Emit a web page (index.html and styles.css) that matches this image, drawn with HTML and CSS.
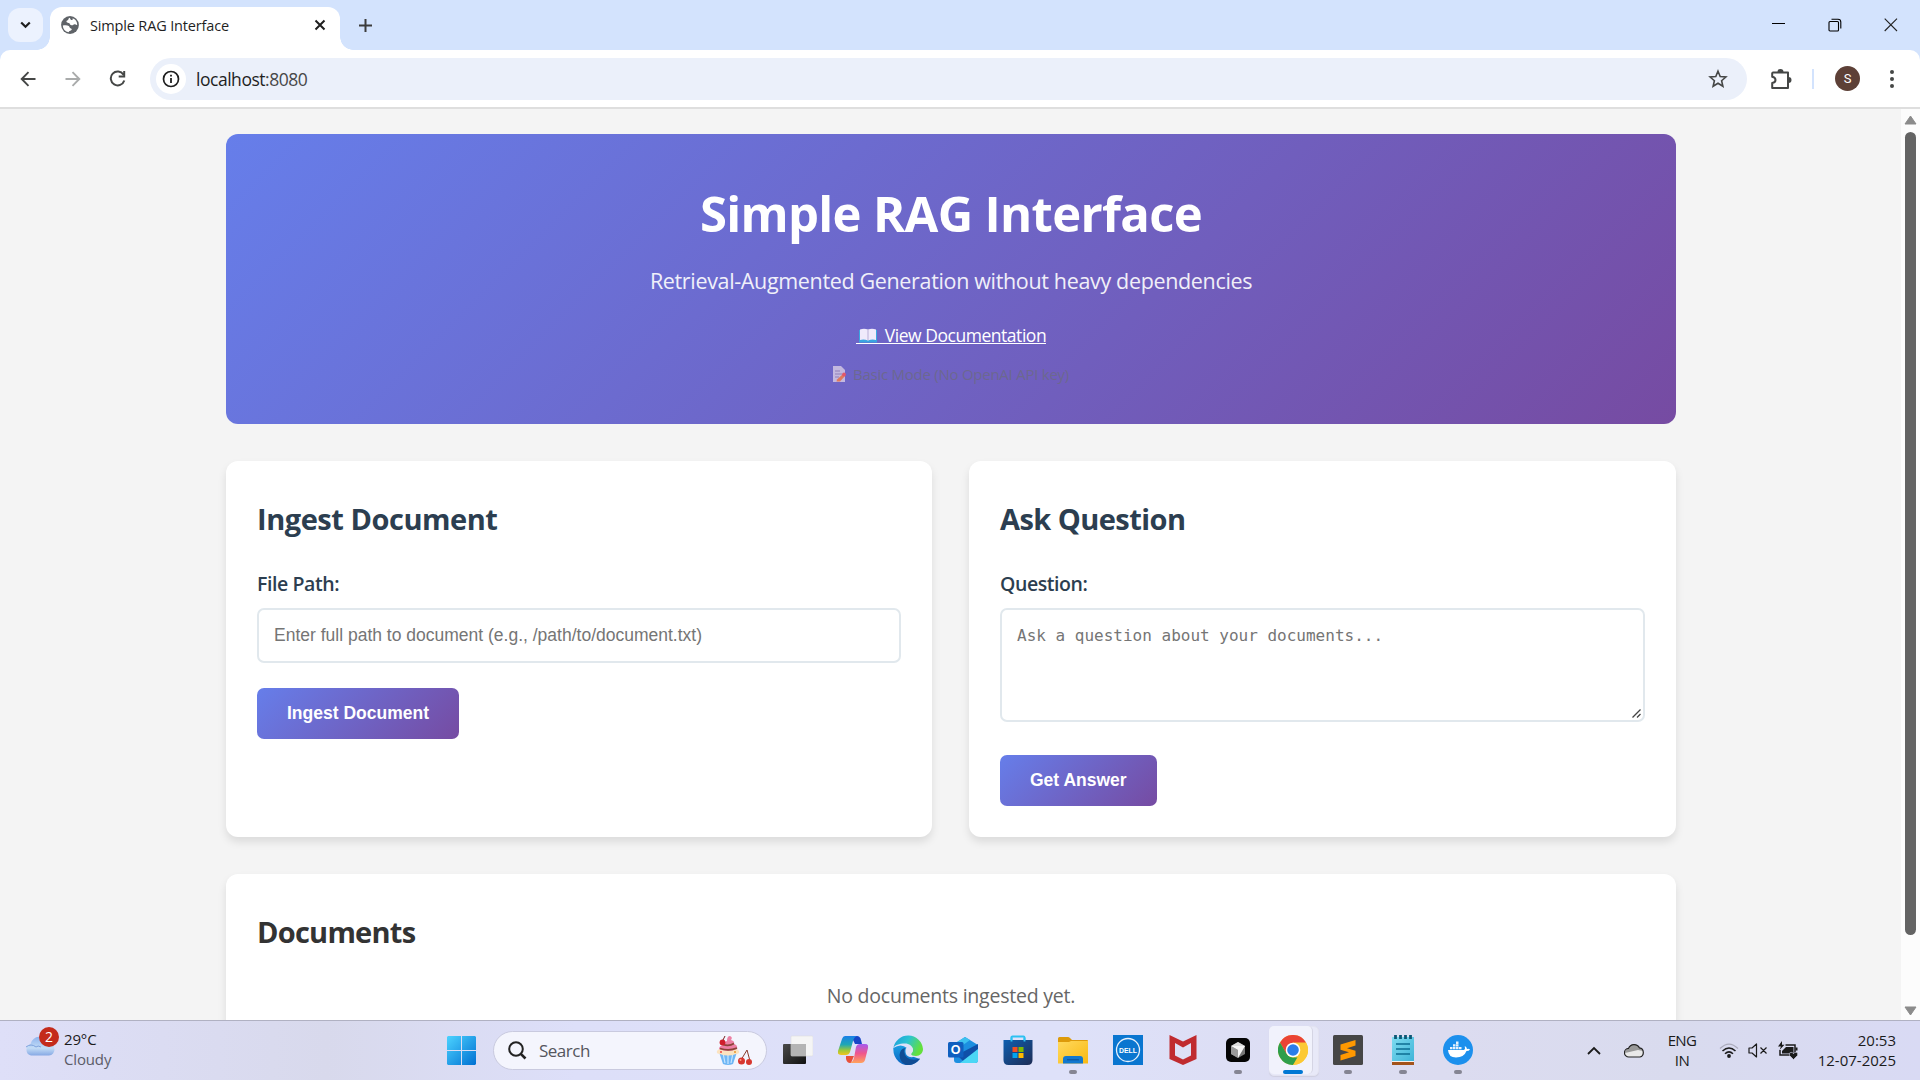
FILE: index.html
```html
<!DOCTYPE html>
<html lang="en">
<head>
<meta charset="utf-8">
<title>Simple RAG Interface</title>
<link rel="stylesheet" href="styles.css">
</head>
<body>
<div class="screen">
  <div class="tabstrip">
    <div class="tab-search"><svg width="11" height="8" viewBox="0 0 11 8"><path d="M1.2 1.5l4.3 4.3 4.3-4.3" fill="none" stroke="#1f1f1f" stroke-width="2.2"/></svg></div>
    <div class="tab">
      <svg width="18" height="18" viewBox="0 0 18 18"><circle cx="9" cy="9" r="8.900" fill="#5f6368"/><path d="M8.500 1.800C6.800 2.500 8 4 6.200 4.600 4.600 5.200 5.800 7 7.500 7c1.700 0 1 2 3 2.300 1.800.3 1.900-1.300 3.500-1 1 .2 1.500.7 2.200.8A7.200 7.200 0 0 0 11.500 2.200c.8 1.500-.4 2.200-1.300 1.700C9.200 3.500 9.500 2.500 8.500 1.800z" fill="#fff"/><path d="M1.800 9.500c2-.4 4.500-.6 6 .5 1.200 1 .4 2.200 2.200 2.400 1.500.2.8 2-.7 2.300-1 .2-1.400.8-1.600 1.600A7.300 7.300 0 0 1 1.800 9.500z" fill="#fff"/></svg>
      <span class="tab-title">Simple RAG Interface</span>
      <svg width="12" height="12" viewBox="0 0 12 12"><path d="M1.500 1.500l9 9m0-9l-9 9" stroke="#1f1f1f" stroke-width="2"/></svg>
    </div>
    <svg class="new-tab" width="13" height="13" viewBox="0 0 13 13"><path d="M6.500 0v13M0 6.500h13" stroke="#3c3c3c" stroke-width="2"/></svg>
    <div class="win-controls">
      <svg width="14" height="14" viewBox="0 0 14 14"><path d="M0 5.500h13" stroke="#000" stroke-width="1"/></svg>
      <svg width="14" height="14" viewBox="0 0 14 14"><rect x="1" y="3.500" width="9.500" height="9.500" rx="1" fill="none" stroke="#000" stroke-width="1.100"/><path d="M3.500 1.200h6.500q2.800 0 2.800 2.800v6.500" fill="none" stroke="#000" stroke-width="1.100"/></svg>
      <svg width="14" height="14" viewBox="0 0 14 14"><path d="M.7 .7l12.300 12.300m0-12.300L.7 13" stroke="#222" stroke-width="1.100"/></svg>
    </div>
  </div>
  <div class="toolbar-wrap">
  <div class="toolbar">
    <svg class="back" width="16" height="16" viewBox="0 0 16 16"><path d="M8.500 1.200L1.700 8l6.800 6.800M2 8h13.500" fill="none" stroke="#454746" stroke-width="1.900"/></svg>
    <svg class="fwd" width="16" height="16" viewBox="0 0 16 16"><path d="M7.500 1.200L14.300 8l-6.800 6.800M14 8H.5" fill="none" stroke="#a9abab" stroke-width="1.900"/></svg>
    <svg class="reload" width="17" height="17" viewBox="0 0 17 17"><path d="M14.500 4.700A6.900 6.900 0 1 0 15.300 10.500M15.200 1v5.500H9.700" fill="none" stroke="#454746" stroke-width="2"/></svg>
    <div class="omnibox">
      <div class="info"><svg width="18" height="18" viewBox="0 0 18 18"><circle cx="9" cy="9" r="7.500" fill="none" stroke="#1f1f1f" stroke-width="1.700"/><path d="M9 8v5M9 4.700v1.900" stroke="#1f1f1f" stroke-width="1.800"/></svg></div>
      <span class="url">localhost<span class="port">:8080</span></span>
      <svg width="20" height="20" viewBox="0 0 20 20"><path d="M10 2.200l2.200 5.300 5.700.5-4.300 3.700 1.300 5.600L10 14.300l-4.900 3 1.300-5.600L2.100 8l5.700-.5z" fill="none" stroke="#454746" stroke-width="1.600"/></svg>
    </div>
    <svg class="ext" width="22" height="22" viewBox="0 0 22 22"><path d="M3 4.500h15v15.500H2.200v-5q3.300-.5 3.300-3T2.200 8.800V5.300z" fill="none" stroke="#454746" stroke-width="2" stroke-linejoin="round"/><path d="M7.500 4a3 3 0 0 1 6 0zM18.500 9v6a3 3 0 0 0 0-6z" fill="#454746"/></svg>
    <div class="tb-sep"></div>
    <div class="avatar">S</div>
    <svg class="dots" width="4" height="18" viewBox="0 0 4 18"><g fill="#454746"><circle cx="2" cy="2" r="2"/><circle cx="2" cy="9" r="2"/><circle cx="2" cy="16" r="2"/></g></svg>
  </div>
  </div>
  <div class="viewport">
    <main class="page">
      <header class="hero">
        <h1>Simple RAG Interface</h1>
        <p class="sub">Retrieval-Augmented Generation without heavy dependencies</p>
        <a class="doc-link" href="#"><svg width="18" height="15" viewBox="0 0 18 15"><path d="M0 2h18v12.500H0z" fill="#3aa5e0"/><path d="M1 1.500Q5 0 9 1.500 13 0 17 1.500V12q-4-1-8 .5Q5 11 1 12z" fill="#efeafb"/><path d="M9 1.500v11" stroke="#b9afd6" stroke-width="1"/></svg>View Documentation</a>
        <p class="mode"><svg width="13" height="16" viewBox="0 0 13 16"><path d="M0 0h8l4 4v12H0z" fill="#c3b8df"/><path d="M2 5h5M2 8h7M2 11h4" stroke="#8f7fb8" stroke-width="1"/><path d="M4 13.500l6-5.500 2 2-5 5.500H3.500z" fill="#e0795c"/><circle cx="11" cy="8.500" r="1.900" fill="#e2576c"/></svg>Basic Mode (No OpenAI API key)</p>
      </header>
      <div class="grid">
        <section class="card">
          <h2>Ingest Document</h2>
          <label>File Path:</label>
          <input type="text" placeholder="Enter full path to document (e.g., /path/to/document.txt)">
          <button>Ingest Document</button>
        </section>
        <section class="card">
          <h2 class="ask">Ask Question</h2>
          <label>Question:</label>
          <div class="field">
            <textarea placeholder="Ask a question about your documents..."></textarea>
            <svg class="grip" width="9" height="9" viewBox="0 0 9 9"><path d="M.5 8.500l8-8M5 8.500L8.500 5" stroke="#444" stroke-width="1.300"/></svg>
          </div>
          <button class="get">Get Answer</button>
        </section>
      </div>
      <section class="card docs">
        <h2>Documents</h2>
        <p>No documents ingested yet.</p>
      </section>
    </main>
    <div class="scrollbar">
      <svg width="13" height="10" viewBox="0 0 13 10"><path d="M6.500 1L12 9H1z" fill="#8b8b8b" stroke="#8b8b8b" stroke-linejoin="round"/></svg>
      <div class="thumb"></div>
      <svg width="13" height="10" viewBox="0 0 13 10"><path d="M6.500 9L12 1H1z" fill="#8b8b8b" stroke="#8b8b8b" stroke-linejoin="round"/></svg>
    </div>
  </div>
  <div class="taskbar">
    <div class="weather">
      <div class="cloud"><svg width="30" height="20" viewBox="0 0 30 20"><defs><linearGradient id="cl" x1="0" y1="0" x2="0" y2="1"><stop offset="0" stop-color="#8fb4ee"/><stop offset=".6" stop-color="#c3dcf6"/><stop offset="1" stop-color="#86a9e4"/></linearGradient></defs><path d="M6 19.500a6 6 0 0 1-.5-11.500A9 9 0 0 1 23 7.500a6 6 0 0 1 1 12z" fill="url(#cl)"/><path d="M1 11q5-4 10 0 2-2 5 0" fill="none" stroke="#7fa3de"/></svg><span class="badge">2</span></div>
      <div class="wtext"><span>29°C</span><span class="muted">Cloudy</span></div>
    </div>
    <div class="center">
      <svg class="start" width="29" height="29" viewBox="0 0 29 29"><defs><linearGradient id="w" x1="0" y1="0" x2="1" y2="1"><stop offset="0" stop-color="#4cd3ff"/><stop offset="1" stop-color="#0070d2"/></linearGradient></defs><path d="M1 0h13v14H0V1zM15 0h13l1 1v13H15zM0 15h14v14H1l-1-1zM15 15h14v13l-1 1H15z" fill="url(#w)"/></svg>
      <div class="search">
        <svg width="19" height="19" viewBox="0 0 19 19"><circle cx="8" cy="8" r="6.800" fill="none" stroke="#222" stroke-width="2"/><path d="M12.800 12.800l4.700 4.700" stroke="#222" stroke-width="2.600"/></svg>
        <span>Search</span>
        <svg width="36" height="31" viewBox="0 0 36 31"><path d="M3 17h18l-4 12q-5 2-10 0z" fill="#6fb7f5"/><path d="M7 18l2 10M12 18v11M17 18l-2 10" stroke="#c8e6ff" stroke-width="1.200"/><path d="M1 16q1-3 11-3t11 3-3 3q-8 3-16 0-4 0-3-3" fill="#fbe3c0"/><path d="M3 14q0-3 4-4-1-3 4-4 0-5 3-5 3 1 1 4 4 1 3 4 4 1 3 5-9 4-18 0" fill="#ec7fa3"/><path d="M7 9.500q6 2 11-1M4 13.500q9 3 17-.5" fill="none" stroke="#8b4438" stroke-width="1.800"/><circle cx="6.500" cy="7.500" r="2.900" fill="#cf1f2b"/><path d="M7 5l2-4" stroke="#7b2020"/><path d="M25 25l6-10 3 11" fill="none" stroke="#8a3b2c" stroke-width="1"/><circle cx="25.500" cy="26" r="3.500" fill="#d7372f"/><circle cx="33" cy="27" r="3" fill="#d7372f"/><circle cx="24.500" cy="25" r="1" fill="#ff9a85"/><circle cx="5" cy="17" r="1" fill="#e44"/><circle cx="19" cy="17" r="1" fill="#e9952a"/></svg>
      </div>
      <div class="apps">
        <div class="app"><svg width="30" height="30" viewBox="0 0 30 30"><defs><linearGradient id="tv" x1="0" y1="0" x2="1" y2="1"><stop offset="0" stop-color="#4a4a4a"/><stop offset="1" stop-color="#111"/></linearGradient></defs><rect y="9" width="23" height="20" rx="1" fill="url(#tv)"/><rect x="8" y="1" width="22" height="20" rx="1" fill="#f5f5f5" stroke="#ddd" stroke-width=".6"/><path d="M8 9h15v12H8z" fill="#b4b4b4"/></svg></div>
        <div class="app"><svg width="30" height="30" viewBox="0 0 30 30"><defs><linearGradient id="ca" x1="0" y1="0" x2="0" y2="1"><stop offset="0" stop-color="#1a7fe8"/><stop offset=".45" stop-color="#1fa7b5"/><stop offset=".75" stop-color="#9bc83a"/><stop offset="1" stop-color="#f3c51c"/></linearGradient><linearGradient id="cb" x1="0" y1="0" x2="0" y2="1"><stop offset="0" stop-color="#a45af0"/><stop offset=".5" stop-color="#f0568c"/><stop offset="1" stop-color="#ffa35c"/></linearGradient></defs><path d="M13 1h6q3 0 4 4l1 4h-7z" fill="#1746c7"/><path d="M8 21h8l-3 7h-1q-3 0-4-4z" fill="#e8503a"/><path d="M7 1h12q-3 1-4 5l-3 11q-1 3-4 3H3q-4 0-3-4L4 4q1-3 3-3z" fill="url(#ca)"/><path d="M23 28H12q3-1 4-5l2-11q1-3 4-3h5q4 0 3 4l-3 12q-1 3-4 3z" fill="url(#cb)"/></svg></div>
        <div class="app"><svg width="30" height="30" viewBox="0 0 30 30"><defs><linearGradient id="e1" x1="0" y1="0" x2="1" y2=".4"><stop offset="0" stop-color="#1c9bdd"/><stop offset=".5" stop-color="#2bc3d2"/><stop offset="1" stop-color="#63e03c"/></linearGradient><linearGradient id="e2" x1="0" y1="0" x2="0" y2="1"><stop offset="0" stop-color="#1b9de2"/><stop offset="1" stop-color="#0a62c0"/></linearGradient></defs><path d="M.3 13Q0 22 6 27t14 2q4-1 7-5l-9-3q-5-3-4-8Q8 8 .3 13z" fill="url(#e2)"/><path d="M.3 13A15 15 0 0 1 30 14c0 4-3 7-7 7-3 0-5-1-5-2s2-2 2-4c0-4-4-6.500-8-6.500C6 8.500 2 10 .3 13z" fill="url(#e1)"/><path d="M12 13q-2 6 2 9.500 5 4 13 1-5 7-13 6.500Q7 28 6.500 20q.5-6 5.500-7z" fill="#104c94"/><path d="M12.500 17q-.5-5 3.500-5t4 3q0 2-2 4 0 2 4 2.500-5 2-8-1-1.300-1.500-1.500-3.500z" fill="#dfe0f7"/></svg></div>
        <div class="app"><svg width="30" height="30" viewBox="0 0 30 30"><path d="M6 9L17 2l13 8v15q0 3-3 3H9q-3 0-3-3z" fill="#1c8fe0"/><path d="M6 9l11-7 5 3L8 15z" fill="#3cc0ef"/><path d="M30 9v7L16 27 9 20z" fill="#0f4fa8"/><path d="M30 14v11q0 3-3 3H12z" fill="#4bd7f5"/><rect y="7" width="15.500" height="15.500" rx="1.500" fill="#0f5fbf"/><text x="7.700" y="19" text-anchor="middle" font-family="Liberation Sans, sans-serif" font-weight="700" font-size="12.500" fill="#fff">O</text></svg></div>
        <div class="app"><svg width="30" height="30" viewBox="0 0 30 30"><defs><linearGradient id="st" x1="0" y1="0" x2="1" y2="1"><stop offset="0" stop-color="#0f5fb0"/><stop offset="1" stop-color="#1d2c55"/></linearGradient></defs><path d="M8.500 7V2.500q0-1 1-1h11q1 0 1 1V7" fill="none" stroke="#2cc1f2" stroke-width="1.900"/><path d="M.5 5h29v20q0 5-5 5h-19q-5 0-5-5z" fill="url(#st)"/><path d="M8.500 2.500v4M21.500 2.500v4" stroke="#2cc1f2" stroke-width="1.900"/><path d="M9.500 12h5v5h-5z" fill="#f25022"/><path d="M15.500 12h5v5h-5z" fill="#7fba00"/><path d="M9.500 18h5v5h-5z" fill="#00a4ef"/><path d="M15.500 18h5v5h-5z" fill="#ffb900"/></svg></div>
        <div class="app"><svg width="30" height="30" viewBox="0 0 30 30"><defs><linearGradient id="fo" x1="0" y1="0" x2="1" y2="1"><stop offset="0" stop-color="#ffd95e"/><stop offset="1" stop-color="#f9b912"/></linearGradient></defs><path d="M0 8V3.500Q0 2 1.500 2H10q1 0 2 1l2 2h15q1 0 1 1v4z" fill="#dd9a0a"/><path d="M0 7h11l2-1h17v22.500H0z" fill="url(#fo)"/><path d="M5 28.500V24q0-3 3-3h14q3 0 3 3v4.500z" fill="#1278cf"/><path d="M9 24.800h12" stroke="#0a4d94" stroke-width="1"/></svg><i class="dot"></i></div>
        <div class="app"><svg width="30" height="30" viewBox="0 0 30 30"><path d="M0 0h30v30H0z" fill="#0a76d0"/><circle cx="15" cy="15" r="11.500" fill="none" stroke="#e8f1fb" stroke-width="1.300"/><text x="15" y="18" text-anchor="middle" font-family="Liberation Sans, sans-serif" font-weight="700" font-size="7.500" textLength="18" lengthAdjust="spacingAndGlyphs" fill="#fff">DELL</text></svg></div>
        <div class="app"><svg width="30" height="30" viewBox="0 0 30 30"><path d="M1.500 0L15 6.500 28.500 0v24L15 30 1.500 24zM7 8v12.500l8 4 8-4V8l-8 4.500z" fill="#c02b2f" fill-rule="evenodd"/></svg></div>
        <div class="app"><svg width="30" height="30" viewBox="0 0 30 30"><rect x="3" y="3" width="24" height="24" rx="5" fill="#050505"/><path d="M15 7l7 4v8l-7 4-7-4v-8z" fill="#777"/><path d="M15 7l7 4-7 4-7-4z" fill="#ddd"/><path d="M8 11h14l-7 12v-8z" fill="#f5f5f5"/><path d="M8 11l7 4v8l-7-4z" fill="#999"/></svg><i class="dot"></i></div>
        <div class="app active"><svg width="30" height="30" viewBox="0 0 30 30"><circle cx="15" cy="15" r="15" fill="#fcc934"/><path d="M2 7.500A15 15 0 0 1 28 7.500H15L8.500 19z" fill="#ea4335"/><path d="M2 7.500l6.500 11.300Q11 22.500 15 22.500h6.500L15 30A15 15 0 0 1 2 7.500z" fill="#2e9e4b"/><path d="M15 30l6.500-11.200L28 7.500A15 15 0 0 1 15 30z" fill="#fcc934"/><circle cx="15" cy="15" r="7.300" fill="#fff"/><circle cx="15" cy="15" r="5.800" fill="#2b7de9"/></svg><i class="dot blue"></i></div>
        <div class="app"><svg width="30" height="30" viewBox="0 0 30 30"><rect width="30" height="30" rx="1.500" fill="#464646"/><path d="M22.500 5v5.500l-8.500 2.700 8.500 2.600V21L7.500 25.500V20l8.500-2.700-8.500-2.500V9.500z" fill="#ff9800"/></svg><i class="dot"></i></div>
        <div class="app"><svg width="30" height="30" viewBox="0 0 30 30"><defs><linearGradient id="np" x1="0" y1="0" x2="1" y2="1"><stop offset="0" stop-color="#7fdcf0"/><stop offset="1" stop-color="#3fb4d8"/></linearGradient></defs><path d="M4 26h22v4H4z" fill="#a3531b"/><path d="M4 25h22v2H4z" fill="#f6f2ee"/><path d="M4 2h22v24H4z" fill="url(#np)"/><path d="M8 9h14M8 14h14M8 19h14" stroke="#0d6e92" stroke-width="1.700"/><path d="M7.500 0v4M12.500 0v4M17.500 0v4M22.500 0v4" stroke="#0d5875" stroke-width="2.800"/></svg><i class="dot"></i></div>
        <div class="app"><svg width="30" height="30" viewBox="0 0 30 30"><circle cx="15" cy="15" r="15" fill="#1c90ed"/><path d="M5 15h16q1.500-1 .8-4 2 1 2.200 3 2-.5 3 .5-1 1.500-3.500 1.500Q21 22.500 13 22.500 5.500 22.500 5 15z" fill="#fff"/><path d="M7 12h2.500v2.300H7zM10 12h2.500v2.300H10zM13 12h2.500v2.300H13zM16 12h2.500v2.300H16zM10 9.300h2.500v2.300H10zM13 9.300h2.500v2.300H13zM13 6.600h2.500v2.300H13z" fill="#e8f3fd"/></svg><i class="dot"></i></div>
      </div>
    </div>
    <div class="tray">
      <svg width="14" height="9" viewBox="0 0 14 9"><path d="M1 8l6-6 6 6" fill="none" stroke="#1b1b1b" stroke-width="1.800"/></svg>
      <svg class="onedrive" width="21" height="15" viewBox="0 0 21 15"><path d="M5 14a4.300 4.300 0 0 1-.5-8.600 6 6 0 0 1 11-.5A4.700 4.700 0 0 1 16 14z" fill="#e9e9e9"/><path d="M1 10q0-4 3.500-4.600a6 6 0 0 1 11-.5L19 8l-5-1z" fill="#999"/><path d="M5 14a4.300 4.300 0 0 1-.5-8.600 6 6 0 0 1 11-.5A4.700 4.700 0 0 1 16 14z" fill="none" stroke="#222" stroke-width="1.200"/></svg>
      <div class="lang"><span>ENG</span><span>IN</span></div>
      <svg class="wifi" width="20" height="15" viewBox="0 0 20 15"><path d="M1 5.500q9-9 18 0" fill="none" stroke="#aab" stroke-width="1.200"/><path d="M3.500 8q6.500-6 13 0M6 10.700q4-3.700 8 0" fill="none" stroke="#1b1b1b" stroke-width="1.500"/><circle cx="10" cy="13" r="1.900" fill="#1b1b1b"/></svg>
      <svg class="vol" width="20" height="15" viewBox="0 0 20 15"><path d="M1 5h3l4.500-4v13L4 10H1zM12.500 4.500l6 6m0-6l-6 6" fill="none" stroke="#1b1b1b" stroke-width="1.200" stroke-linejoin="round"/></svg>
      <svg class="batt" width="21" height="19" viewBox="0 0 21 19"><path d="M7.500 4H17v10H2V9" fill="none" stroke="#1b1b1b" stroke-width="1.500"/><path d="M8 6h7.500v6.500H4V10l2-2zM17.500 6.500h2v3h-2z" fill="#1b1b1b"/><path d="M4 0L0 5.500h3L1.500 9 6.500 3.700H4z" fill="#1b1b1b"/><path d="M15.500 18.500l-4-4q-1-3 1.500-3.200 1.800 0 2.500 1.400.7-1.400 2.500-1.400 2.500.2 1.500 3.200z" fill="#1b1b1b" stroke="#dadcf0" stroke-width=".6"/></svg>
      <div class="clock"><span>20:53</span><span>12-07-2025</span></div>
    </div>
  </div>
</div>
</body>
</html>
```
FILE: styles.css
```css
* { box-sizing: border-box; margin: 0; padding: 0; }
body { width: 1920px; height: 1080px; overflow: hidden; font-family: "Open Sans", sans-serif; }
svg { display: block; flex: none; }
.screen { display: flex; flex-direction: column; height: 1080px; }

/* browser frame */
.tabstrip { display: flex; align-items: center; height: 50px; flex: none; background: #d3e3fd; padding-left: 8px; }
.tab-search { width: 35px; height: 34px; border-radius: 12px; background: #ecf2fe; display: flex; align-items: center; justify-content: center; }
.tab { position: relative; display: flex; align-items: center; width: 290px; height: 43px; margin: 7px 0 0 7px; padding: 0 14px 7px 11px; background: #fff; border-radius: 12px 12px 0 0; }
.tab::before, .tab::after { content: ""; position: absolute; bottom: 0; width: 13px; height: 13px; }
.tab::before { left: -13px; background: radial-gradient(circle at 0 0, transparent 12.5px, #fff 13px); }
.tab::after { right: -13px; background: radial-gradient(circle at 100% 0, transparent 12.5px, #fff 13px); }
.tab-title { flex: 1; margin-left: 11px; font-size: 14.5px; letter-spacing: -.16px; color: #1f1f1f; }
.new-tab { margin-left: 19px; }
.win-controls { display: flex; gap: 42px; margin: 0 22px 0 auto; }
.toolbar-wrap { background: #d3e3fd; flex: none; }
.toolbar { display: flex; align-items: center; height: 59px; background: #fff; border-radius: 10px 10px 0 0; border-bottom: 2px solid #dedede; padding-left: 20px; }
.fwd { margin-left: 29px; }
.reload { margin-left: 28px; }
.omnibox { display: flex; align-items: center; width: 1597px; height: 42px; margin-left: 24px; padding: 0 19px 0 6px; background: #ebf0fa; border-radius: 21px; }
.info { width: 30px; height: 30px; border-radius: 50%; background: #fff; display: flex; align-items: center; justify-content: center; }
.url { flex: 1; margin-left: 10px; font-size: 17.5px; letter-spacing: -.47px; color: #1f1f1f; }
.port { color: #474747; }
.ext { margin-left: 23px; }
.tb-sep { width: 2px; height: 20px; margin-left: 20px; background: #d3e3fd; }
.avatar { width: 25px; height: 25px; margin-left: 21px; border-radius: 50%; background: #5d4037; color: #fff; font: 13px/25px Roboto, sans-serif; text-align: center; }
.dots { margin-left: 30px; }

/* page */
.viewport { display: flex; height: 911px; flex: none; overflow: hidden; background: #f4f4f4; }
.page { width: 1450px; margin: 25px 225px 0 226px; flex: none; }
.hero { display: flex; flex-direction: column; align-items: center; height: 290px; padding-top: 49px; border-radius: 12px; color: #fff; background: linear-gradient(135deg, #667eea 0%, #764ba2 100%); }
.hero h1 { font-size: 49px; line-height: 60px; letter-spacing: -.68px; }
.sub { margin-top: 23px; font-size: 21.5px; line-height: 30px; letter-spacing: -.34px; opacity: .9; }
.doc-link { display: flex; align-items: center; gap: 8px; height: 24px; margin-top: 27px; padding-left: 3px; font-size: 17.5px; line-height: 24px; letter-spacing: -.47px; color: #fff; text-decoration: none; background: linear-gradient(#fff, #fff) 0 20px / 100% 1px no-repeat; }
.mode { display: flex; align-items: center; gap: 7px; margin-top: 16px; font-size: 15px; line-height: 22px; letter-spacing: -.25px; color: #6c6890; }
.grid { display: grid; grid-template-columns: 706px 707px; gap: 37px; margin-top: 37px; }
.card { display: flex; flex-direction: column; align-items: flex-start; height: 376px; padding: 38px 31px 0; background: #fff; border-radius: 12px; box-shadow: 0 5px 8px rgba(0,0,0,.1); }
.card h2 { font-size: 29px; line-height: 40px; letter-spacing: -.46px; color: #2c3e50; }
.card .ask { letter-spacing: -.55px; }
.card label { margin-top: 31px; font-size: 19.5px; line-height: 28px; font-weight: 600; letter-spacing: -.42px; color: #2c3e50; }
.card input, .card textarea { width: 100%; border: 2px solid #e1e8ed; border-radius: 7px; padding: 0 15px; font: 17.5px "Liberation Sans", sans-serif; outline: none; background: #fff; }
.card input { height: 55px; margin-top: 10px; }
.field { position: relative; width: 100%; margin-top: 10px; }
.card textarea { display: block; height: 114px; padding-top: 16px; font: 16px/20px "DejaVu Sans Mono", monospace; resize: none; }
.grip { position: absolute; right: 4px; bottom: 4px; }
input::placeholder, textarea::placeholder { color: #757575; }
.card button { height: 51px; margin-top: 25px; padding: 0 30px; border: 0; border-radius: 7px; color: #fff; font: bold 17.5px "Liberation Sans", sans-serif; background: linear-gradient(135deg, #667eea 0%, #764ba2 100%); }
.card .get { margin-top: 33px; }
.docs { margin-top: 37px; }
.docs h2 { color: #333; letter-spacing: -.75px; }
.docs p { align-self: center; margin-top: 29px; font-size: 19.5px; line-height: 30px; letter-spacing: -.22px; color: #666; }
.scrollbar { width: 19px; flex: none; background: #fcfcfc; display: flex; flex-direction: column; align-items: center; padding: 6px 0 4px; }
.thumb { width: 11px; height: 803px; margin: 7px 0 auto; border-radius: 6px; background: #636363; }

/* taskbar */
.taskbar { position: relative; display: flex; height: 60px; flex: none; border-top: 1px solid #b0b1c2; background: linear-gradient(90deg, #dedff8 0, #d8d9ec 17%, #dddff9 30%, #dee1f9 55%, #dcdcf0 75%, #d9dbee 87%, #d9daf4 100%); color: #1b1b1b; }
.weather { display: flex; width: 447px; padding: 5px 0 0 25px; }
.cloud { position: relative; width: 30px; padding-top: 10px; }
.badge { position: absolute; left: 14px; top: 1px; width: 20px; height: 20px; border-radius: 50%; background: #c42b1c; color: #fff; font-size: 14px; line-height: 20px; text-align: center; }
.wtext { display: flex; flex-direction: column; margin-left: 9px; padding-top: 3px; font-size: 15px; line-height: 20px; letter-spacing: -.15px; }
.muted { color: #5b5c68; }
.center { display: flex; align-items: center; height: 58px; }
.search { display: flex; align-items: center; width: 274px; height: 39px; margin-left: 17px; padding: 0 14px 0 14px; border-radius: 20px; background: #f4f5fd; border: 1px solid #c9cadf; }
.search span { flex: 1; margin-left: 12px; font-size: 17px; letter-spacing: -.5px; color: #55565e; }
.apps { display: flex; margin-left: 3px; }
.app { position: relative; display: flex; align-items: center; justify-content: center; width: 55px; height: 58px; }
.app svg { position: relative; }
.dot { position: absolute; left: 24px; bottom: 5px; width: 8px; height: 4px; border-radius: 2px; background: #858593; }
.dot.blue { left: 18px; width: 20px; background: #0078d4; }
.active::before { content: ""; position: absolute; left: 4px; top: 5px; width: 48px; height: 48px; border-radius: 5px; background: #e8e9f8; border: 1px solid #e3e3f1; box-shadow: 0 1px 1px #cfcfe0; }
.active::after { content: ""; position: absolute; left: 4px; top: 5px; width: 43px; height: 48px; border-radius: 5px; background: #f1f2fc; border-right: 1px solid #d5d5e4; }
.active svg, .active .dot { z-index: 1; }
.tray { display: flex; align-items: center; height: 58px; margin-left: auto; padding-right: 24px; }
.onedrive { margin-left: 23px; }
.lang, .clock { display: flex; flex-direction: column; font-size: 15px; line-height: 20px; letter-spacing: -.15px; }
.lang { width: 32px; margin-left: 21px; align-items: center; letter-spacing: -.6px; }
.wifi { margin-left: 21px; }
.vol { margin-left: 9px; }
.batt { margin-left: 10px; }
.clock { align-items: flex-end; width: 80px; margin-left: 17px; letter-spacing: 0; }
```
